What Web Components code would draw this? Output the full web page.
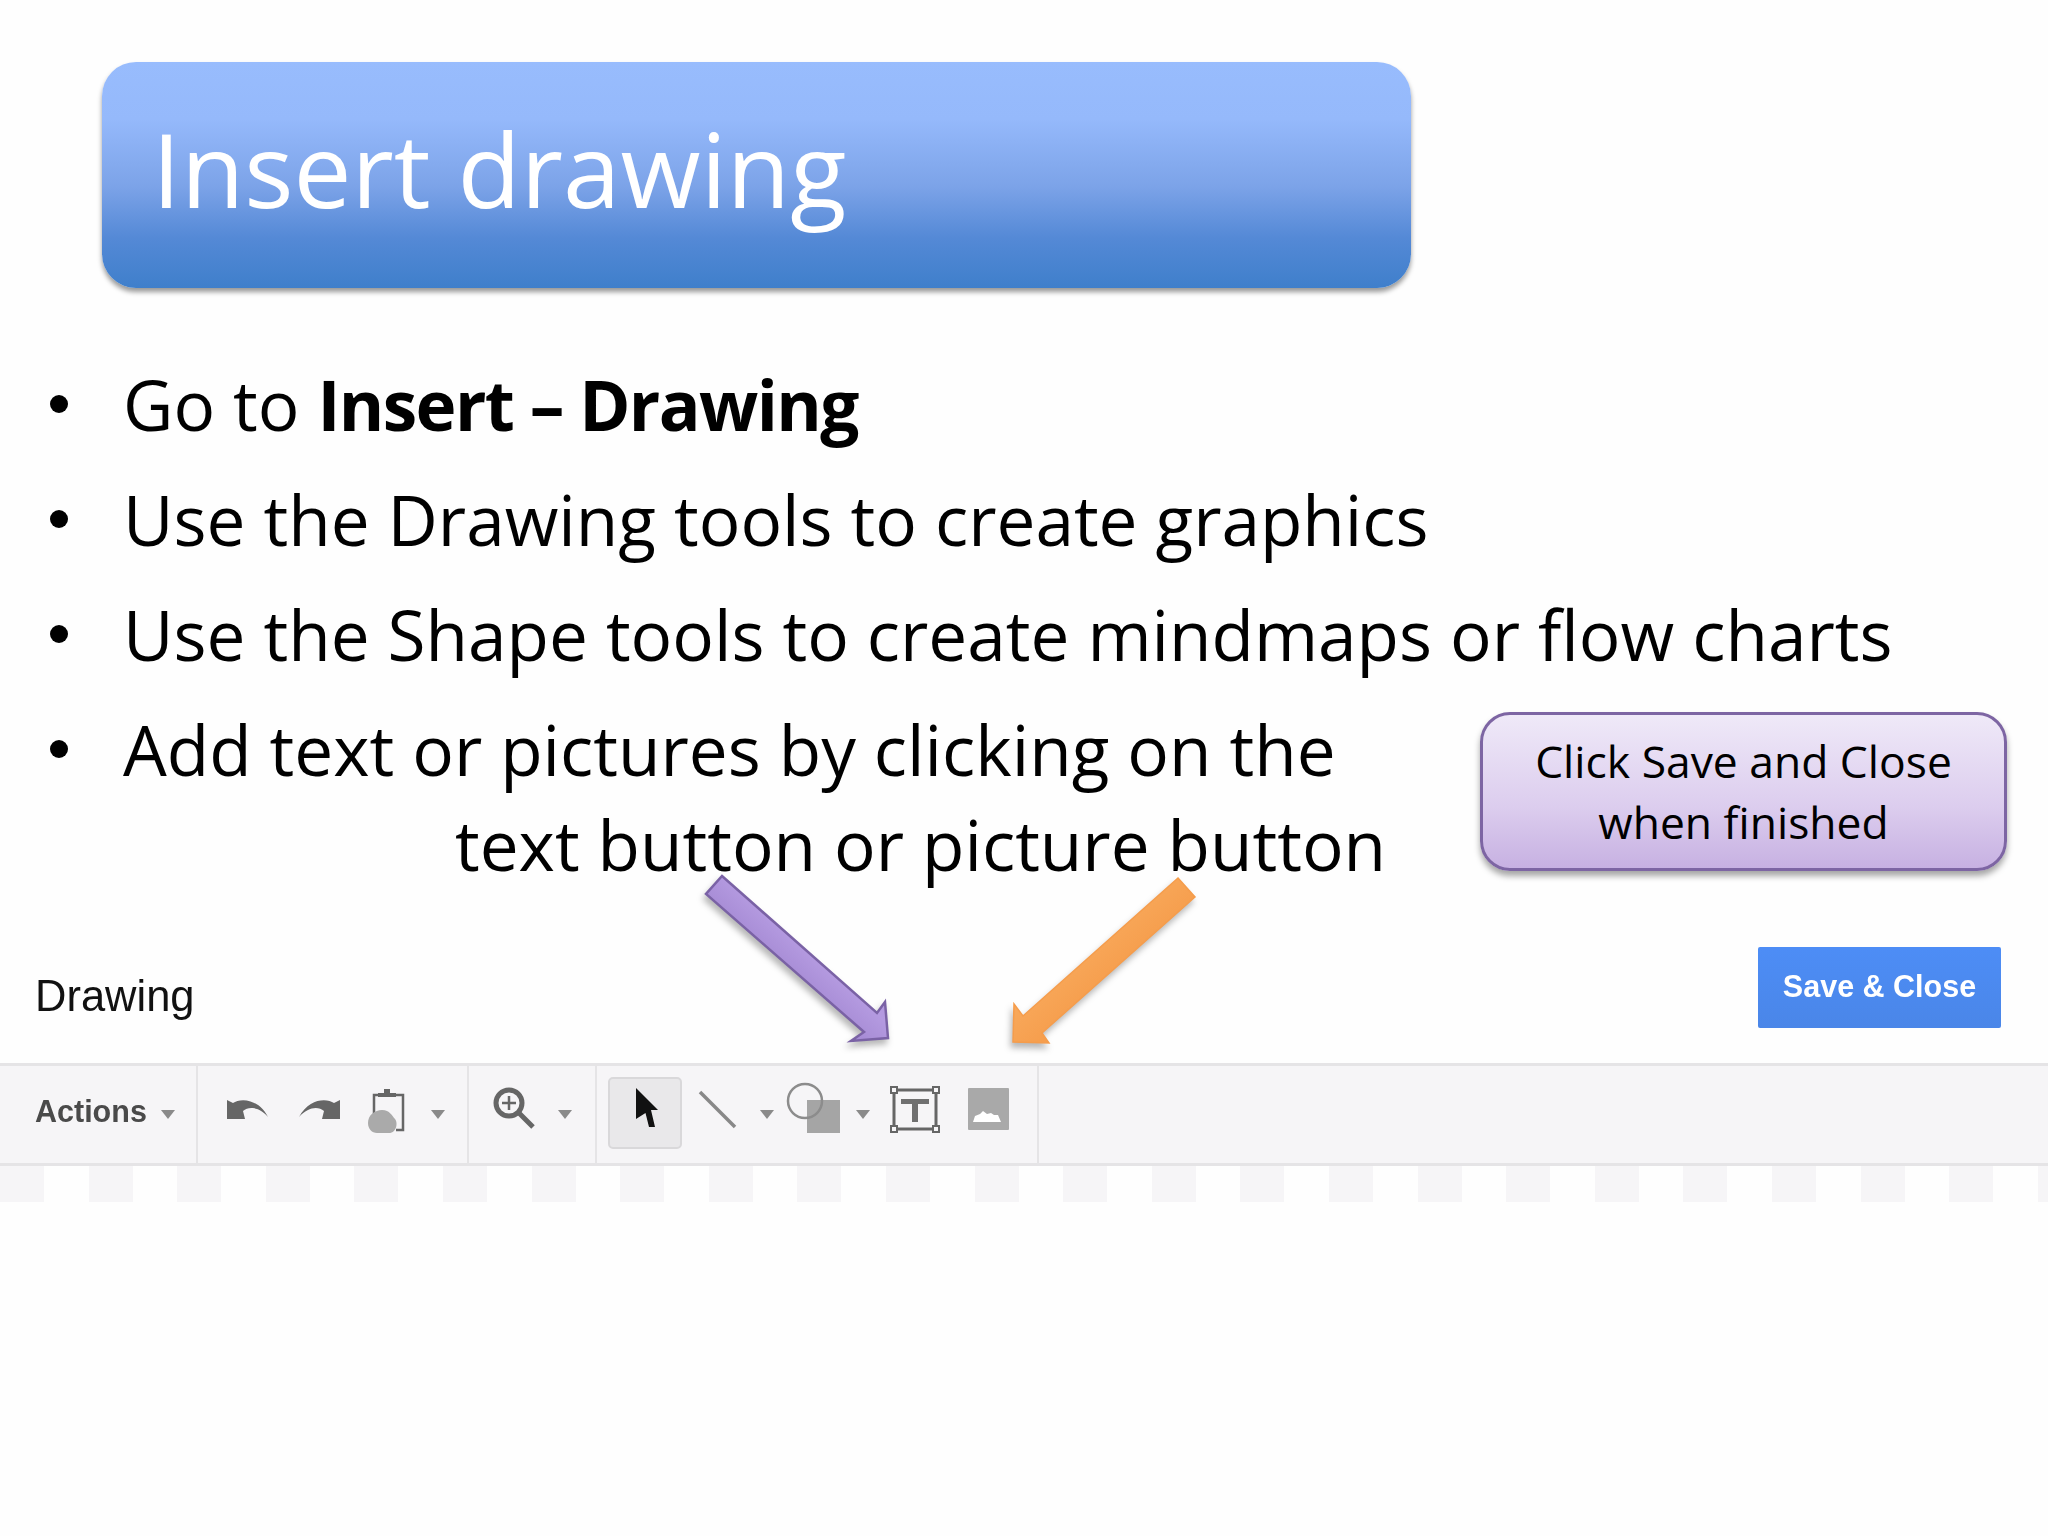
<!DOCTYPE html>
<html lang="en"><head><meta charset="utf-8"><title>Insert drawing</title>
<style>
html,body{margin:0;padding:0;background:#fefefe}
body{width:2048px;height:1536px;overflow:hidden;position:relative;font-family:"Open Sans","Liberation Sans",sans-serif;color:#000}
</style></head><body>
<slide-title>Insert drawing</slide-title>
<bullet-list>
  <bullet-item>Go to <b>Insert – Drawing</b></bullet-item>
  <bullet-item>Use the Drawing tools to create graphics</bullet-item>
  <bullet-item>Use the Shape tools to create mindmaps or flow charts</bullet-item>
  <bullet-item>Add text or pictures by clicking on the<span slot="cont">text button or picture button</span></bullet-item>
</bullet-list>
<slide-callout>Click Save and Close<br>when finished</slide-callout>
<slide-arrow kind="purple"></slide-arrow>
<slide-arrow kind="orange"></slide-arrow>
<drawing-panel>
  <span slot="name">Drawing</span>
  <span slot="action">Save &amp; Close</span>
  <draw-toolbar>
    <tb-group w="198"><tb-label>Actions</tb-label><tb-icon name="drop" from="146" to="196"></tb-icon></tb-group>
    <tb-group w="271">
      <tb-icon name="undo" from="198" to="284"></tb-icon>
      <tb-icon name="redo" from="284" to="356"></tb-icon>
      <tb-icon name="clip" from="356" to="420"></tb-icon>
      <tb-icon name="drop" from="420" to="467"></tb-icon>
    </tb-group>
    <tb-group w="128">
      <tb-icon name="zoom" from="469" to="545"></tb-icon>
      <tb-icon name="drop" from="545" to="595"></tb-icon>
    </tb-group>
    <tb-group w="442">
      <tb-icon name="gap" from="597" to="608"></tb-icon>
      <tb-icon name="cursor" from="608" to="683" active></tb-icon>
      <tb-icon name="line" from="683" to="752"></tb-icon>
      <tb-icon name="drop" from="752" to="782"></tb-icon>
      <tb-icon name="shapes" from="782" to="848"></tb-icon>
      <tb-icon name="drop" from="848" to="880"></tb-icon>
      <tb-icon name="text" from="880" to="950"></tb-icon>
      <tb-icon name="image" from="950" to="1020"></tb-icon>
    </tb-group>
  </draw-toolbar>
  <checker-strip></checker-strip>
</drawing-panel>
<script>
function def(name, css, html, init){
  customElements.define(name, class extends HTMLElement{
    constructor(){super();const r=this.attachShadow({mode:'open'});r.innerHTML='<style>'+css+'</style>'+html;}
    connectedCallback(){init&&init.call(this,this.shadowRoot);}
  });
}
def('slide-title',
 `:host{display:flex;align-items:center;box-sizing:border-box;margin:62px 0 0 102px;width:1309px;height:226px;padding:0 0 14px 50px;border-radius:34px;
   background:linear-gradient(#98bcfd 0%,#95b9fb 25%,#7ca3e8 55%,#5489d6 78%,#3f7fcb 100%);box-shadow:0 4px 5px rgba(0,0,0,.4);
   color:#fff;font:400 103.4px/1 "Open Sans",sans-serif}`,'<slot></slot>');
def('bullet-list',`:host{display:flex;flex-direction:column;gap:20px;margin-top:70px;padding-left:47px;font:400 69.3px/95px "Open Sans",sans-serif;color:#000}`,'<slot></slot>');
def('bullet-item',
 `:host{display:grid;grid-template-columns:76px 1fr;align-items:start}
  i{width:18px;height:18px;border-radius:50%;background:#000;margin:37px 0 0 3px}
  div{margin:-1px 0 1px}
  ::slotted(b){font-weight:700;letter-spacing:-1.6px}
  ::slotted([slot=cont]){display:block;padding-left:332px}`,
 '<i></i><div><slot></slot><slot name="cont"></slot></div>');
def('slide-callout',
 `:host{position:absolute;left:1480px;top:712px;width:527px;height:159px;box-sizing:border-box;display:flex;align-items:center;justify-content:center;text-align:center;
  border:3px solid #7d65a3;border-radius:30px;background:linear-gradient(#efe9f8,#dccdee 60%,#c7b1e2);box-shadow:0 5px 6px rgba(0,0,0,.35);
  font:400 44.4px/61px "Open Sans",sans-serif;color:#000}`,'<div><slot></slot></div>');
def('slide-arrow',
 `:host{position:absolute;left:700px;top:870px;width:500px;height:180px}
  svg{display:block;overflow:visible;filter:drop-shadow(-2px 5px 3px rgba(0,0,0,.28))}`,'<svg width="500" height="180" viewBox="700 870 500 180"></svg>',
 function(r){
  const s=r.querySelector('svg');
  if(this.getAttribute('kind')==='purple'){
    s.innerHTML='<defs><linearGradient id="p" x1="0" y1="1" x2="1" y2="0"><stop offset=".4" stop-color="#a388d2"/><stop offset=".55" stop-color="#b49ae0"/><stop offset="1" stop-color="#a98fd8"/></linearGradient></defs><polygon points="722,876 877,1013 885,1002 888,1038 851,1041 864,1032 706,894" fill="url(#p)" stroke="#7a62a5" stroke-width="2.5" stroke-linejoin="miter"/>';
  }else{
    s.innerHTML='<defs><linearGradient id="o" x1="0" y1="0" x2="1" y2="1"><stop offset=".4" stop-color="#f8a85a"/><stop offset=".65" stop-color="#f59a48"/></linearGradient></defs><polygon points="1178,878 1195,897 1042,1033 1049,1043 1013,1042 1014,1004 1023,1016" fill="url(#o)" stroke="#f59c4b" stroke-width="1.5"/>';
  }
 });
def('drawing-panel',
 `:host{display:block}
  header{display:flex;justify-content:space-between;align-items:flex-start;box-sizing:border-box;height:170px;padding:0 47px 0 35px}
  .n{padding-top:78px;font:400 43.5px/50px "Liberation Sans",sans-serif;color:#111;filter:blur(.6px)}
  .a{margin-top:54px;box-sizing:border-box;width:243px;height:81px;display:flex;align-items:center;justify-content:center;padding-bottom:2px;border-radius:2px;
     background:linear-gradient(#4d8df6,#4a86e8);font:700 30.5px/1 "Liberation Sans",sans-serif;color:#fff;filter:blur(.6px)}`,
 '<header><div class="n"><slot name="name"></slot></div><div class="a"><slot name="action"></slot></div></header><slot></slot>');
def('draw-toolbar',
 `:host{display:flex;box-sizing:border-box;height:103px;background:#f6f5f7;border-top:3px solid #e5e4e6;border-bottom:3px solid #e5e4e6}`,'<slot></slot>');
def('tb-group',
 `:host{display:flex;box-sizing:border-box;border-right:2px solid #e5e4e6;height:97px;align-items:stretch}`,'<slot></slot>',
 function(){this.style.width=this.getAttribute('w')+'px';});
def('tb-label',
 `:host{display:flex;align-items:center;box-sizing:border-box;width:146px;padding:0 0 6px 35px;font:700 30.5px/1 "Liberation Sans",sans-serif;color:#4a4a4a;filter:blur(.6px)}`,'<slot></slot>');
const ICONS={
 drop:(f,t)=>{const c=(f+t)/2;const x=({146:168,420:438,545:565,752:767,848:863})[f]||c;return `<polygon points="${x-7},1110 ${x+7},1110 ${x},1119" fill="#8a8a8a"/>`;},
 gap:()=>'',
 undo:()=>'<path d="M227 1100 L233 1103 C240 1098 258 1098 268 1117 C259 1107 249 1106 243 1111 L245 1119 L227 1119Z" fill="#666"/>',
 redo:()=>'<path d="M340 1100 L334 1103 C327 1098 309 1098 299 1117 C308 1107 318 1106 324 1111 L322 1119 L340 1119Z" fill="#666"/>',
 clip:()=>'<path d="M374 1125V1095H403V1130H396" fill="none" stroke="#666" stroke-width="2.5"/><path d="M378 1097v-4h6v-4h6v4h6v4z" fill="#666"/><path d="M368 1123c0-8 7-13 14-13 8 0 10 6 13 9 3 3 2 14-6 14h-12c-5 0-9-4-9-10z" fill="#aaa"/>',
 zoom:()=>'<circle cx="509" cy="1103" r="13" fill="none" stroke="#666" stroke-width="5"/><path d="M509 1096v14M502 1103h14" stroke="#666" stroke-width="2.5"/><path d="M519 1113l14 14" stroke="#666" stroke-width="5"/>',
 cursor:()=>'<polygon points="636,1088 658,1110 651,1110 655,1127 649,1127 645.5,1113 636,1119" fill="#111"/>',
 line:()=>'<path d="M700 1092L735 1127" stroke="#888" stroke-width="3.5"/>',
 shapes:()=>'<rect x="807" y="1100" width="33" height="33" fill="#a5a5a5"/><circle cx="805" cy="1101" r="17" fill="none" stroke="#8c8c8c" stroke-width="2.5"/>',
 text:()=>'<rect x="894" y="1090" width="42" height="39" fill="none" stroke="#666" stroke-width="3"/><g fill="#f6f5f7" stroke="#666" stroke-width="2"><rect x="891" y="1087" width="6" height="6"/><rect x="933" y="1087" width="6" height="6"/><rect x="891" y="1126" width="6" height="6"/><rect x="933" y="1126" width="6" height="6"/></g><path d="M901 1099h28v5h-11v18h-6v-18h-11z" fill="#707070"/>',
 image:()=>'<rect x="968" y="1088" width="41" height="42" rx="1" fill="#a9a9a9"/><path d="M973 1122l2-6 5-2 3-3 4 3 4-1 3 2 4 0 3 7z" fill="#fff"/>'
};
def('tb-icon',
 `:host{display:block;position:relative;flex:none;height:97px}
  svg{display:block;filter:blur(.35px)}
  .btn{position:absolute;left:0;top:11px;width:74px;height:72px;box-sizing:border-box;border:2px solid #d9d8da;border-radius:5px;background:#e9e8ea}`,
 '',function(r){
  const f=+this.getAttribute('from'),t=+this.getAttribute('to'),w=t-f,n=this.getAttribute('name');
  this.style.width=w+'px';
  r.innerHTML=r.querySelector('style').outerHTML+(this.hasAttribute('active')?'<div class="btn"></div>':'')+
   `<svg style="position:relative" width="${w}" height="97" viewBox="${f} 1066 ${w} 97">${ICONS[n](f,t)}</svg>`;
 });
def('checker-strip',
 `:host{display:block;height:36px;background:repeating-linear-gradient(90deg,#f6f5f7 0,#f6f5f7 44px,#fefefe 44px,#fefefe 88.6px)}`,'');
</script>
</body></html>
